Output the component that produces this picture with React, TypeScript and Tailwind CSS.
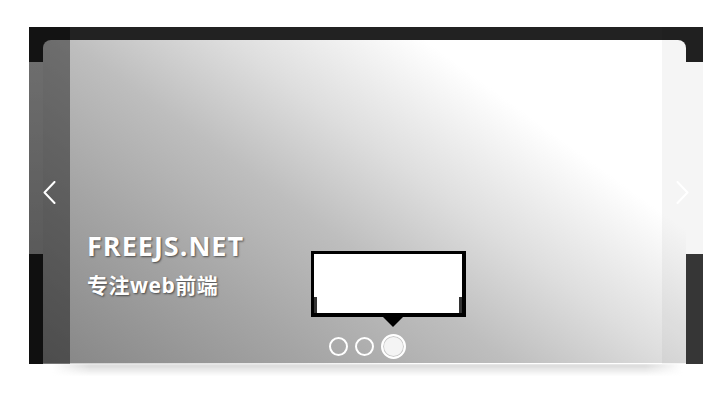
import React from "react";

function Chevron({ dir }: { dir: "left" | "right" }) {
  return (
    <svg width="13" height="23" viewBox="0 0 13 23" fill="none">
      <path
        d={dir === "left" ? "M11.5 1 L1.5 11.5 L11.5 22" : "M1.5 1 L11.5 11.5 L1.5 22"}
        stroke="white"
        strokeWidth="2"
        strokeLinecap="round"
        strokeLinejoin="round"
      />
    </svg>
  );
}

export default function App() {
  return (
    <div
      className="w-[720px] h-[400px] bg-white overflow-hidden"
      style={{ fontFamily: '"Open Sans", "Noto Sans CJK SC", sans-serif' }}
    >
      <div className="pt-[27px] pl-[29px]">
        <div className="relative w-[674px] h-[337px] bg-[#222222] flex flex-col">
          <div className="h-[13px] shrink-0" />
          <div className="flex flex-1">
            <div className="w-[14px] flex flex-col">
              <div className="h-[22px]" />
              <div className="h-[192px] bg-[linear-gradient(to_bottom,#bdbdbd,#9c9c9c)]" />
              <div className="flex-1 bg-[#1c1c1c]" />
            </div>
            <div className="flex-1 rounded-t-[8px] border-b border-white/25 bg-[linear-gradient(36deg,#858585_0%,#a5a5a5_25%,#bebebe_43%,#dedede_58%,#ffffff_76%,#ffffff_100%)]" />
            <div className="w-[17px] flex flex-col">
              <div className="h-[22px]" />
              <div className="h-[192px] bg-white" />
              <div className="flex-1 bg-[#393939]" />
            </div>
          </div>

          {/* caption */}
          <div className="absolute left-[58px] top-[202px] text-white font-bold [text-shadow:1px_1px_2px_rgba(0,0,0,0.55)]">
            <div className="text-[27px] leading-[34px] tracking-[1px]">FREEJS.NET</div>
            <div className="text-[21px] leading-[28px] mt-[8px] tracking-[0.5px]">专注web前端</div>
          </div>

          {/* prev / next overlays */}
          <div className="absolute left-0 top-0 w-[41px] h-full bg-black/[0.42] flex items-center justify-center pb-[7px]">
            <Chevron dir="left" />
          </div>
          <div className="absolute right-0 top-0 w-[41px] h-full bg-black/[0.04] flex items-center justify-center pb-[7px] pr-[1px]">
            <Chevron dir="right" />
          </div>

          {/* thumbnail tooltip */}
          <div className="absolute left-[282px] top-[224px] flex flex-col items-center">
            <div className="w-[155px] h-[66px] bg-black pt-[3px] pl-[3px] pr-[4px] pb-[4px]">
              <div className="w-full h-full bg-white flex items-end justify-between">
                <div className="w-[3px] h-[16px] bg-[#333333]" />
                <div className="w-[3px] h-[16px] bg-[#333333]" />
              </div>
            </div>
            <div className="self-start ml-[72px] w-0 h-0 border-l-[10px] border-r-[10px] border-t-[10px] border-l-transparent border-r-transparent border-t-black" />
          </div>

          {/* dots */}
          <div className="absolute left-[300px] top-[307px] h-[25px] flex items-center gap-[7px]">
            <div className="w-[19px] h-[19px] rounded-full border-2 border-white" />
            <div className="w-[19px] h-[19px] rounded-full border-2 border-white" />
            <div className="w-[25px] h-[25px] rounded-full border-2 border-white bg-[#f4f4f4] shadow-[inset_0_0_0_1px_#c8c8c8]" />
          </div>
        </div>
        <div className="ml-[23px] w-[631px] h-[12px] blur-[1px] bg-[linear-gradient(to_bottom,#d6d6d6,rgba(255,255,255,0))] [mask-image:linear-gradient(to_right,transparent,black_6%,black_94%,transparent)]" />
      </div>
    </div>
  );
}
